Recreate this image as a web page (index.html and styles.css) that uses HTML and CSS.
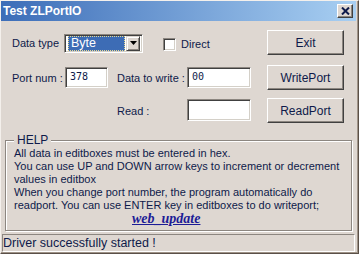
FILE: index.html
```html
<!DOCTYPE html>
<html lang="en">
<head>
    <meta charset="UTF-8">
    <title>Test ZLPortIO</title>
    <link rel="stylesheet" href="styles.css">
</head>
<body>
    <div class="window">
        <div class="titlebar">
            <span class="title">Test ZLPortIO</span>
            <button class="close" aria-label="Close">
                <svg width="9" height="8" viewBox="0 0 9 8">
                    <path d="M1 0.5 L8 7.5 M8 0.5 L1 7.5" stroke="#0e1a4a" stroke-width="2" fill="none"/>
                </svg>
            </button>
        </div>

        <div class="client">
            <div class="row row-1">
                <span class="label label-type">Data type</span>
                <div class="combo">
                    <span class="combo-value">Byte</span>
                    <span class="combo-drop">
                        <svg width="7" height="4" viewBox="0 0 7 4"><path d="M0 0 H7 L3.5 4 Z" fill="#000"/></svg>
                    </span>
                </div>
                <span class="check"></span>
                <span class="label label-direct">Direct</span>
                <button class="btn">Exit</button>
            </div>

            <div class="row row-2">
                <span class="label label-port">Port num :</span>
                <div class="edit edit-port">378</div>
                <span class="label label-data">Data to write :</span>
                <div class="edit edit-data">00</div>
                <button class="btn">WritePort</button>
            </div>

            <div class="row row-3">
                <span class="label label-read">Read :</span>
                <div class="edit edit-read"></div>
                <button class="btn">ReadPort</button>
            </div>

            <fieldset class="help">
                <legend>HELP</legend>
                <p>All data in editboxes must be entered in hex.</p>
                <p>You can use UP and DOWN arrow keys to increment or decrement values in editbox</p>
                <p>When you change port number, the program automatically do readport. You can use ENTER key in editboxes to do writeport;</p>
                <a class="web-link" href="#">web_update</a>
            </fieldset>

            <div class="statusbar">Driver successfully started !</div>
        </div>
    </div>
</body>
</html>
```

FILE: styles.css
```css
body {
    margin: 0;
    font-family: 'Liberation Sans', Arial, sans-serif;
    background: #ded7d1;
}
.window {
    width: 359px;
    height: 254px;
    box-sizing: border-box;
    border-top: 1px solid #f4f0ec;
    border-left: 1px solid #f4f0ec;
    border-right: 1px solid #5a5048;
    border-bottom: 1px solid #5a5048;
    padding-right: 2px;
    box-shadow: inset -1px -1px #a09488;
    background: #ded7d1;
    color: #0e1a4a;
    font-size: 11px;
    display: flex;
    flex-direction: column;
}
.titlebar {
    height: 20px;
    background: linear-gradient(to right, #3c6db8, #a8cff2);
    display: flex;
    align-items: center;
    padding-left: 2px;
}
.title {
    color: #fff;
    font-weight: bold;
    font-size: 12px;
}
.close {
    margin-left: auto;
    margin-right: 3px;
    width: 16px;
    height: 14px;
    padding: 0;
    box-sizing: border-box;
    background: #ded7d1;
    border: 1px solid;
    border-color: #fff #404040 #404040 #fff;
    box-shadow: inset -1px -1px #8c8680;
    display: flex;
    align-items: center;
    justify-content: center;
}
.client {
    flex: 1;
    display: flex;
    flex-direction: column;
}
.row {
    display: flex;
    align-items: center;
    height: 25px;
}
.row-1 {
    margin-top: 9px;
}
.row-2 {
    margin-top: 10px;
}
.row-3 {
    margin-top: 8px;
}
.label {
    line-height: 13px;
    white-space: nowrap;
}
.label-type {
    margin-left: 11px;
    width: 52px;
    padding-top: 2px;
}
.label-port {
    margin-left: 11px;
    width: 53px;
    padding-top: 1px;
}
.label-data {
    margin-left: 9px;
    width: 70px;
    padding-top: 1px;
}
.label-read {
    margin-left: 116px;
    width: 70px;
    padding-top: 2px;
}
.label-direct {
    margin-left: 5px;
    padding-top: 3px;
}
.combo {
    width: 79px;
    height: 19px;
    box-sizing: border-box;
    background: #fff;
    border: 1px solid;
    border-color: #8c8680 #fff #fff #8c8680;
    box-shadow: inset 1px 1px #404040, inset -1px -1px #d4d0c8;
    display: flex;
    align-items: center;
    padding: 2px 2px 2px 3px;
    margin-top: 1px;
}
.combo-value {
    flex: 1;
    height: 15px;
    box-sizing: border-box;
    background: #3d6cb5;
    color: #fff;
    font-size: 12.5px;
    line-height: 13px;
    padding-left: 2px;
    border: 1px dotted #e8d890;
}
.combo-drop {
    width: 14px;
    height: 15px;
    box-sizing: border-box;
    background: #ded7d1;
    border: 1px solid;
    border-color: #ded7d1 #404040 #404040 #ded7d1;
    box-shadow: inset 1px 1px #fff, inset -1px -1px #8c8680;
    display: flex;
    align-items: center;
    justify-content: center;
    margin-left: 1px;
}
.check {
    width: 13px;
    height: 13px;
    box-sizing: border-box;
    margin-left: 20px;
    margin-top: 4px;
    background: #fff;
    border: 1px solid;
    border-color: #8c8680 #fff #fff #8c8680;
    box-shadow: inset 1px 1px #404040, inset -1px -1px #d4d0c8;
}
.edit {
    height: 21px;
    box-sizing: border-box;
    background: #fff;
    border: 1px solid;
    border-color: #8c8680 #fff #fff #8c8680;
    box-shadow: inset 1px 1px #404040, inset -1px -1px #d4d0c8;
    font-family: 'DejaVu Sans Mono', monospace;
    font-size: 10px;
    line-height: 17px;
    padding-left: 4px;
    color: #0e1a4a;
}
.edit-port {
    width: 43px;
}
.edit-data {
    width: 64px;
}
.edit-read {
    width: 64px;
    height: 22px;
    margin-top: -2px;
}
.btn {
    margin-left: auto;
    margin-right: 12px;
    width: 77px;
    height: 25px;
    box-sizing: border-box;
    background: #ded7d1;
    border: 1px solid;
    border-color: #fff #404040 #404040 #fff;
    box-shadow: inset -1px -1px #8c8680;
    font-family: 'Liberation Sans', Arial, sans-serif;
    font-size: 12px;
    color: #0e1a4a;
    padding: 0;
}
.help {
    margin: 10px 0 0 4px;
    width: 347px;
    height: 98px;
    box-sizing: border-box;
    border: 1px solid #8c8680;
    box-shadow: inset 1px 1px #fff, 1px 1px #fff;
    padding: 0 0 0 8px;
}
.help legend {
    padding: 0 3px;
    line-height: 14px;
    font-size: 12px;
    background: #ded7d1;
}
.help p {
    margin: 0;
    font-size: 11px;
    line-height: 13px;
}
.web-link {
    display: block;
    margin-left: 118px;
    font-family: 'Liberation Serif', 'Times New Roman', serif;
    font-weight: bold;
    font-style: italic;
    font-size: 14px;
    line-height: 14px;
    color: #1c1c96;
    text-decoration: underline;
    width: max-content;
}
.statusbar {
    margin: 3px 0 0 1px;
    height: 18px;
    width: 353px;
    box-sizing: border-box;
    border: 1px solid;
    border-color: #8c8680 #fff #fff #8c8680;
    font-size: 12.5px;
    line-height: 16px;
    padding-left: 0;
}
```
